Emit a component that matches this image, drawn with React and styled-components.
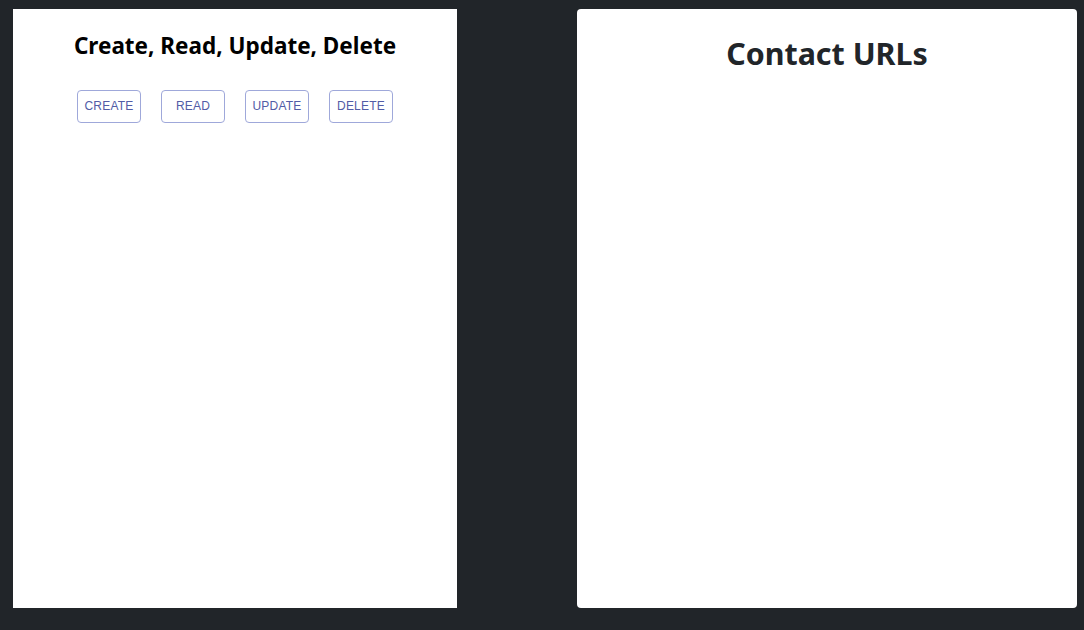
import React from 'react'
import styled, { createGlobalStyle } from 'styled-components'

const GlobalStyle = createGlobalStyle`
body{
    margin: 0;
    background-color: #212529;
    font-family: "Noto Sans", "Open Sans", sans-serif;
}
`

const actions = ['CREATE', 'READ', 'UPDATE', 'DELETE']

function App() {
    return (
        <Page>
            <GlobalStyle />
            <CrudPanel>
                <CrudTitle>Create, Read, Update, Delete</CrudTitle>
                <ButtonRow>
                    {actions.map(a => (<ActionButton key={a}>{a}</ActionButton>))}
                </ButtonRow>
            </CrudPanel>
            <UrlPanel>
                <UrlTitle>Contact URLs</UrlTitle>
            </UrlPanel>
        </Page>
    )
}

export default App

const Page = styled.div`
display: flex;
align-items: flex-start;
gap: 120px;
padding: 9px 0 0 13px;
height: 630px;
box-sizing: border-box;
`

const CrudPanel = styled.div`
width: 444px;
height: 599px;
background-color: #fff;
display: flex;
flex-direction: column;
align-items: center;
`

const CrudTitle = styled.h2`
margin: 22px 0 0;
font-size: 22.5px;
font-weight: 700;
line-height: 30px;
color: #000;
`

const ButtonRow = styled.div`
display: flex;
gap: 20px;
margin-top: 29px;
`

const ActionButton = styled.button`
width: 64px;
height: 33px;
padding: 0 0 1px;
background: #fff;
border: 1px solid #9fa8da;
border-radius: 4px;
color: #525ca6;
font-family: "Liberation Sans", Arial, sans-serif;
font-size: 12px;
letter-spacing: 0.2px;
cursor: pointer;
`

const UrlPanel = styled.div`
width: 500px;
height: 599px;
background-color: #fff;
border-radius: 4px;
display: flex;
flex-direction: column;
align-items: center;
`

const UrlTitle = styled.h1`
margin: 24px 0 0;
font-size: 30.4px;
font-weight: 700;
line-height: 42px;
color: #212529;
`
